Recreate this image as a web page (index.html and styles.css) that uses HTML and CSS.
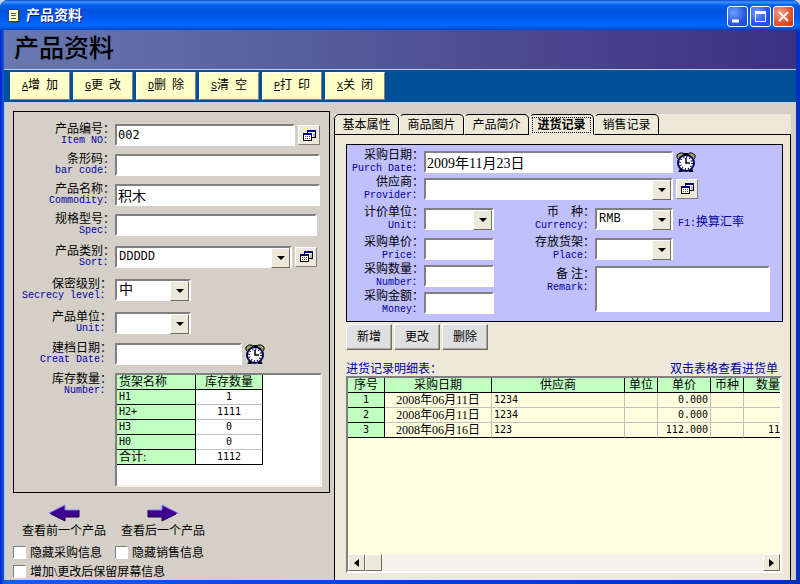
FILE: index.html
```html
<!DOCTYPE html>
<html lang="zh-CN">
<head>
<meta charset="utf-8">
<title>产品资料</title>
<link rel="stylesheet" href="styles.css">
</head>
<body>
<svg width="0" height="0" class="defs">
<defs>
<symbol id="windows" viewBox="0 0 13 13">
<rect x="4.5" y="1.5" width="8" height="7" fill="#fff" stroke="#000"/>
<rect x="4" y="1" width="9" height="2" fill="#000080"/>
<path d="M10 5h2M10 7h2" stroke="#777"/>
<rect x="0.5" y="4.5" width="8" height="7" fill="#fff" stroke="#000"/>
<rect x="0" y="4" width="9" height="2" fill="#000080"/>
<path d="M2 7.5h1M4 7.5h1M6 7.5h1M2 9.5h1M4 9.5h1M6 9.5h1" stroke="#555"/>
</symbol>
<symbol id="clock" viewBox="0 0 20 20">
<path d="M5 17l-1 2h3M15 17l1 2h-3" fill="none" stroke="#000" stroke-width="2"/>
<path d="M1 6V3l3-2h3l1 2-5 5zM19 6V3l-3-2h-3l-1 2 5 5z" fill="#a8a850" stroke="#000"/>
<circle cx="10" cy="11" r="8" fill="#fff" stroke="#000050" stroke-width="2"/>
<circle cx="10" cy="11" r="6" fill="none" stroke="#000060" stroke-width="2" stroke-dasharray="1 2.1"/>
<path d="M10 6v5h4" fill="none" stroke="#000" stroke-width="1.5"/>
<path d="M8 2h4" stroke="#000" stroke-width="2"/>
</symbol>
<symbol id="arrow" viewBox="0 0 32 18">
<path d="M1 9L17 1v5h14v7H17v4z" fill="#400090"/>
<path d="M1 9L17 1v5h14" fill="none" stroke="#8080ff" stroke-width="1"/>
<path d="M31 6v7H17v4L3 10" fill="none" stroke="#200048" stroke-width="1"/>
</symbol>
</defs>
</svg>
<div class="window">
<header class="titlebar">
<svg class="app-icon" width="12" height="14" viewBox="0 0 12 14"><rect x="0.5" y="0.5" width="11" height="13" rx="1" fill="#404820"/><rect x="1" y="1" width="9" height="11" fill="#ffffd0"/><path d="M3 4.5h5M3 6.5h5M3 9.5h5" stroke="#406040"/></svg>
<span class="caption">产品资料</span>
<button class="sys" aria-label="最小化"><svg width="19" height="19"><path d="M4 14h7" stroke="#fff" stroke-width="3"/></svg></button>
<button class="sys" aria-label="最大化"><svg width="19" height="19"><path d="M4.5 5v9.5h10V5" fill="none" stroke="#fff"/><path d="M4 5.5h11" stroke="#fff" stroke-width="3"/></svg></button>
<button class="sys close" aria-label="关闭"><svg width="19" height="19"><path d="M5 5l9 9M14 5l-9 9" stroke="#fff" stroke-width="2"/></svg></button>
</header>
<h1 class="banner">产品资料</h1>
<nav class="toolbar">
<button><u>A</u>增  加</button>
<button><u>G</u>更  改</button>
<button><u>D</u>删  除</button>
<button><u>S</u>清  空</button>
<button><u>P</u>打  印</button>
<button><u>X</u>关  闭</button>
</nav>
<main class="client">
<section class="left">
<form class="product">
<div class="row">
<label for="item">产品编号：<small>Item NO：</small></label>
<input type="text" id="item" class="code" value="002">
<button type="button" class="pick" aria-label="选择编号"><svg width="13" height="13"><use href="#windows"/></svg></button>
</div>
<div class="row">
<label for="barcode">条形码：<small>bar code：</small></label>
<input type="text" id="barcode">
</div>
<div class="row">
<label for="commodity">产品名称：<small>Commodity：</small></label>
<input type="text" id="commodity" value="积木">
</div>
<div class="row short">
<label for="spec">规格型号：<small>Spec：</small></label>
<input type="text" id="spec">
</div>
<div class="row tall short">
<label for="sort">产品类别：<small>Sort：</small></label>
<span class="combo"><select id="sort"><option>DDDDD</option></select></span>
<button type="button" class="pick" aria-label="选择类别"><svg width="13" height="13"><use href="#windows"/></svg></button>
</div>
<div class="row tall inset">
<label for="secrecy">保密级别：<small>Secrecy level：</small></label>
<span class="combo small"><select id="secrecy"><option>中</option></select></span>
</div>
<div class="row tall inset">
<label for="unit">产品单位：<small>Unit：</small></label>
<span class="combo small"><select id="unit"><option></option></select></span>
</div>
<div class="row inset">
<label for="created">建档日期：<small>Creat Date：</small></label>
<input type="text" id="created" class="date">
<svg class="clock" width="20" height="20"><use href="#clock"/></svg>
</div>
<div class="row stock inset">
<span class="label">库存数量：<small>Number：</small></span>
<div class="stock-box">
<table class="grid stock-table">
<tr><th class="name">货架名称</th><th>库存数量</th></tr>
<tr><th class="name code">H1</th><td class="code">1</td></tr>
<tr><th class="name code">H2+</th><td class="code">1111</td></tr>
<tr><th class="name code">H3</th><td class="code">0</td></tr>
<tr><th class="name code">H0</th><td class="code">0</td></tr>
<tr><th class="name">合计:</th><td class="code">1112</td></tr>
</table>
</div>
</div>
</form>
<div class="pager">
<a href="#"><svg width="32" height="18"><use href="#arrow"/></svg>查看前一个产品</a>
<a href="#"><svg width="32" height="18" class="next"><use href="#arrow"/></svg>查看后一个产品</a>
</div>
<div class="checks">
<label><input type="checkbox">隐藏采购信息</label>
<label><input type="checkbox">隐藏销售信息</label>
<label class="wide"><input type="checkbox">增加\更改后保留屏幕信息</label>
</div>
</section>
<section class="right">
<div class="tabs" role="tablist">
<button role="tab">基本属性</button>
<button role="tab">商品图片</button>
<button role="tab">产品简介</button>
<button role="tab" class="active" aria-selected="true"><span>进货记录</span></button>
<button role="tab">销售记录</button>
</div>
<div class="page">
<form class="purchase">
<label for="pdate">采购日期：<small>Purch Date：</small></label>
<input type="text" id="pdate" class="span3" value="2009年11月23日">
<svg class="clock" width="20" height="20"><use href="#clock"/></svg>
<label for="provider">供应商：<small>Provider：</small></label>
<span class="combo span3"><select id="provider"><option></option></select></span>
<button type="button" class="pick" aria-label="选择供应商"><svg width="13" height="13"><use href="#windows"/></svg></button>
<label for="punit">计价单位：<small>Unit：</small></label>
<span class="combo"><select id="punit"><option></option></select></span>
<label for="currency">币&emsp;种：<small>Currency：</small></label>
<span class="combo"><select id="currency"><option>RMB</option></select></span>
<a href="#" class="rate"><span class="latin">F1:</span>换算汇率</a>
<label for="price">采购单价：<small>Price：</small></label>
<input type="text" id="price">
<label for="place">存放货架：<small>Place：</small></label>
<span class="combo"><select id="place"><option></option></select></span>
<label for="number" class="first">采购数量：<small>Number：</small></label>
<input type="text" id="number">
<label for="remark" class="remark-label">备 注：<small>Remark：</small></label>
<textarea id="remark"></textarea>
<label for="money" class="first">采购金额：<small>Money：</small></label>
<input type="text" id="money">
</form>
<div class="actions">
<button>新增</button>
<button>更改</button>
<button>删除</button>
</div>
<div class="heading"><span>进货记录明细表：</span><span>双击表格查看进货单</span></div>
<div class="records">
<div class="view">
<table class="grid">
<colgroup><col class="c-no"><col class="c-date"><col><col class="c-unit"><col class="c-price"><col class="c-cur"><col class="c-num"></colgroup>
<tr><th>序号</th><th>采购日期</th><th>供应商</th><th>单位</th><th>单价</th><th>币种</th><th class="last">数量</th></tr>
<tr><th class="code">1</th><td>2008年06月11日</td><td class="text code">1234</td><td></td><td class="num code">0.000</td><td></td><td class="last"></td></tr>
<tr><th class="code">2</th><td>2008年06月11日</td><td class="text code">1234</td><td></td><td class="num code">0.000</td><td></td><td class="last"></td></tr>
<tr><th class="code">3</th><td>2008年06月16日</td><td class="text code">123</td><td></td><td class="num code">112.000</td><td></td><td class="last code">11</td></tr>
</table>
</div>
<div class="scroll">
<button aria-label="向左"><svg width="5" height="8"><path d="M5 0v8L0 4z"/></svg></button>
<span class="thumb"></span>
<button class="end" aria-label="向右"><svg width="5" height="8"><path d="M0 0v8l5-4z"/></svg></button>
</div>
</div>
</div>
</section>
</main>
</div>
</body>
</html>
```
FILE: styles.css
```css
* {
  box-sizing: border-box;
}
body {
  margin: 0;
  background: #c8d4ec;
  color: #000;
  font: 12px/12px "Liberation Serif", "Noto Sans CJK SC", sans-serif;
}
button, input, select, textarea {
  margin: 0;
  font: inherit;
  color: inherit;
}
.defs {
  position: absolute;
}
.window {
  display: flex;
  flex-direction: column;
  min-height: 100vh;
  padding: 0 4px 4px;
  border-radius: 8px 8px 0 0;
  background: linear-gradient(to right, #0020c8, #1060e8 4px, #0840d8 50%, #0030c0);
  overflow: hidden;
}

/* title bar */
.titlebar {
  display: flex;
  align-items: center;
  gap: 2px;
  height: 30px;
  margin: 0 -4px;
  padding: 2px 6px 0 8px;
  background: linear-gradient(#0848c8, #3c94ff 2px, #0860ee 5px, #0053e1 10px, #0058ee 18px, #0068ff 25px, #0050d8 29px, #0040b8);
}
.caption {
  flex: 1;
  padding-left: 4px;
  color: #fff;
  font-size: 14px;
  line-height: 16px;
  font-weight: bold;
  text-shadow: 1px 1px #002080;
}
.sys {
  width: 21px;
  height: 21px;
  padding: 0;
  border: 1px solid #fff;
  border-radius: 3px;
  background: radial-gradient(circle at 30% 30%, #6c9cff, #2858e0 60%, #1848d0);
}
.sys.close {
  background: radial-gradient(circle at 30% 30%, #f0a088, #e05030 60%, #c03810);
}
.sys svg {
  display: block;
}
.banner {
  height: 40px;
  margin: 0;
  padding-left: 10px;
  border-bottom: 1px solid #c0d0f0;
  background: linear-gradient(to right, #6878b0, #3c3080);
  font-size: 25px;
  line-height: 38px;
  font-weight: 500;
}
.toolbar {
  display: flex;
  gap: 3px;
  height: 33px;
  padding: 2px 6px;
  border-bottom: 1px solid #c0d0f0;
  background: #005098;
}
.toolbar button {
  width: 60px;
  height: 28px;
  padding: 0;
  border: 1px solid;
  border-color: #fff #808080 #808080 #fff;
  background: #ffffc8;
  white-space: pre;
}
.toolbar u, .latin {
  font-family: "Liberation Mono", monospace;
  font-size: 10px;
}

.client {
  flex: 1;
  display: flex;
  border-left: 1px solid #a8c0e8;
  background: #d4d0c8;
}

/* shared controls */
input[type=text], textarea, .combo {
  min-width: 0;
  border: 2px solid;
  border-color: #808080 #fff #fff #808080;
  border-radius: 0;
  background: #fff;
}
input[type=text] {
  height: 22px;
  padding: 0 1px;
  font-size: 14px;
}
input.code {
  font: 12px/16px "DejaVu Sans Mono", monospace;
}
.combo {
  position: relative;
  display: flex;
  height: 22px;
}
.combo select {
  flex: 1;
  min-width: 0;
  appearance: none;
  border: 0;
  padding: 0 18px 0 2px;
  background: none;
  font: 12px/16px "Liberation Mono", "Noto Sans CJK SC", monospace;
}
.combo.small select {
  font-size: 14px;
}
.combo::before {
  content: "";
  position: absolute;
  top: 0;
  right: 0;
  width: 17px;
  height: 18px;
  border: 1px solid;
  border-color: #fff #706c60 #706c60 #fff;
  background: #ece9d8;
  pointer-events: none;
}
.combo::after {
  content: "";
  position: absolute;
  top: 8px;
  right: 5px;
  border: 4px solid transparent;
  border-top-color: #000;
  border-bottom: 0;
  pointer-events: none;
}
.pick {
  display: flex;
  align-items: center;
  justify-content: center;
  width: 22px;
  height: 20px;
  padding: 0;
  border: 1px solid;
  border-color: #fff #808080 #808080 #fff;
  background: #ece9d8;
}
.row label, .label, .purchase label {
  text-align: right;
  white-space: nowrap;
}
small {
  display: block;
  padding-right: 2px;
  color: #0000a0;
  font: 10px/12px "Liberation Mono", "Noto Sans CJK SC", monospace;
}

/* product form */
.left {
  flex: 0 0 329px;
  min-width: 0;
  padding: 8px 4px 0 8px;
}
.product {
  height: 382px;
  padding: 8px 9px 0 0;
  border: 1px solid #000;
}
.row {
  display: flex;
  align-items: center;
  height: 30px;
}
.row.tall {
  height: 33px;
}
.row label, .label {
  flex: 0 0 101px;
}
.row.inset label, .inset .label {
  padding-right: 3px;
}
.row input {
  flex: 1;
}
.row.short {
  padding-right: 3px;
}
.row .combo {
  flex: 1;
}
.row .combo.small {
  flex: 0 0 76px;
}
.row input.date {
  flex: 0 0 127px;
}
.row .pick {
  margin-left: 3px;
}
.row .clock {
  margin-left: 3px;
}
.row.stock {
  align-items: flex-start;
  height: auto;
  padding-top: 4px;
}
.stock-box {
  flex: 1;
  height: 114px;
  margin-right: -2px;
  border: 2px solid;
  border-color: #808080 #f4f2e8 #f4f2e8 #808080;
  background: #fff;
}
.grid {
  border-collapse: separate;
  border-spacing: 0;
  table-layout: fixed;
}
.grid th, .grid td {
  height: 15px;
  padding: 0;
  border-right: 1px solid #c0c0c0;
  border-bottom: 1px solid #c0c0c0;
  line-height: 14px;
  font-weight: normal;
  text-align: center;
  white-space: nowrap;
}
.grid th {
  border-color: #000;
  background: #c0ffc0;
}
.grid .code {
  font-family: "DejaVu Sans Mono", monospace;
  font-size: 10px;
}
.grid tr:last-child td {
  border-bottom-color: #000;
}
.stock-table {
  width: 146px;
}
.stock-table td {
  border-right-color: #000;
}
.grid .name {
  width: 79px;
  padding-left: 2px;
  text-align: left;
}

.pager {
  display: flex;
  gap: 15px;
  padding: 11px 0 0 9px;
}
.pager a {
  display: flex;
  flex-direction: column;
  align-items: center;
  gap: 3px;
  color: #000;
  text-decoration: none;
}
.pager .next {
  transform: scaleX(-1);
}
.checks {
  display: grid;
  grid-template-columns: 102px 1fr;
  gap: 6px 0;
  padding-top: 9px;
}
.checks label {
  display: flex;
  align-items: center;
  gap: 4px;
}
.checks .wide {
  grid-column: span 2;
}
.checks input {
  appearance: none;
  width: 13px;
  height: 13px;
  margin: 0;
  border: 1px solid;
  border-color: #808080 #fff #fff #808080;
  background: #fff;
}

/* tabs */
.right {
  flex: 1;
  display: flex;
  flex-direction: column;
  min-width: 0;
  margin: 11px 5px 0 0;
}
.tabs {
  display: flex;
  height: 21px;
  background: #ece9d8;
}
.tabs button {
  width: 65px;
  height: 21px;
  padding: 0;
  border: 1px solid #000;
  border-left-color: #fff;
  border-radius: 5px 5px 0 0;
  background: #ece9d8;
}
.tabs button:first-child {
  border-left-color: #000;
}
.tabs .active {
  border-bottom-color: #ece9d8;
  font-weight: bold;
}
.active span {
  display: block;
  margin: 0 3px;
  padding: 1px 0;
  outline: 1px dotted #000;
}
.tabs::after {
  content: "";
  flex: 1;
  border-bottom: 1px solid #000;
}
.page {
  flex: 1;
  display: flex;
  flex-direction: column;
  min-height: 0;
  padding: 9px 7px 7px 11px;
  border: 1px solid #000;
  border-width: 0 1px;
  background: #ece9d8;
}

/* purchase form */
.purchase {
  display: grid;
  grid-template-columns: 77px 70px 101px 78px 1fr;
  grid-template-rows: 27px 27px 33px 27px 27px 27px;
  align-items: center;
  height: 178px;
  padding-top: 3px;
  border: 1px solid #000;
  background: #c0c0ff;
}
.purchase label, .purchase small {
  line-height: 13px;
}
.purchase .span3 {
  grid-column: span 3;
}
.purchase .first {
  grid-column: 1;
}
.purchase .clock, .purchase .pick {
  margin-left: 3px;
}
.rate {
  padding: 8px 0 0 5px;
  color: #0000a0;
  text-decoration: none;
}
.purchase .remark-label {
  grid-area: 5 / 3 / 7 / 4;
  align-self: start;
  padding-top: 6px;
}
.purchase textarea {
  grid-area: 5 / 4 / 7 / 6;
  height: 46px;
  margin-right: 12px;
  resize: none;
}
.actions {
  display: flex;
  gap: 2px;
  padding-top: 2px;
}
.actions button {
  width: 46px;
  height: 26px;
  padding: 0;
  border: 1px solid;
  border-color: #fff #706c60 #706c60 #fff;
  background: #e0e0e0;
  box-shadow: inset -1px -1px #a8a8a0;
}
.heading {
  display: flex;
  justify-content: space-between;
  padding: 13px 5px 1px 0;
  color: #0000a0;
}

.records {
  flex: 1;
  display: flex;
  flex-direction: column;
  margin-right: 1px;
  border: 2px solid;
  border-color: #808080 #fff #fff #808080;
  background: #ffffe0;
}
.view {
  flex: 1;
}
.view .grid {
  width: 100%;
}
.c-no { width: 37px; }
.c-date { width: 107px; }
.c-unit { width: 33px; }
.c-price { width: 53px; }
.c-cur { width: 33px; }
.c-num { width: 36px; }
.grid .text {
  padding-left: 2px;
  text-align: left;
}
.grid .num {
  padding-right: 2px;
  text-align: right;
}
.grid .last {
  border-right: 0;
  text-align: right;
}
.scroll {
  display: flex;
  height: 17px;
  background: #f4f2ec;
}
.scroll button, .thumb {
  display: flex;
  align-items: center;
  justify-content: center;
  width: 17px;
  height: 17px;
  padding: 0;
  border: 1px solid;
  border-color: #fff #706c60 #706c60 #fff;
  background: #ece9d8;
}
.scroll .end {
  margin-left: auto;
}
```
